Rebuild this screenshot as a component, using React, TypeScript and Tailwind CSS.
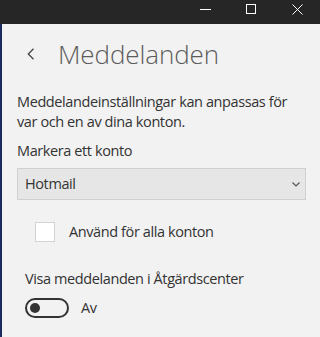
import React from "react";

export default function App() {
  const font = { fontFamily: '"Open Sans", "Noto Sans", sans-serif' };
  return (
    <div className="w-[320px] h-[337px] bg-[#f2f2f2] flex flex-col overflow-hidden" style={font}>
      <div className="h-[24px] bg-[#262626] flex justify-end shrink-0">
        <div className="w-[46px] flex justify-center pt-[9px]">
          <div className="w-[11px] h-[1px] bg-white" />
        </div>
        <div className="w-[46px] flex justify-center pt-[4px]">
          <div className="w-[10px] h-[10px] border border-white" />
        </div>
        <div className="w-[46px] flex justify-center pt-[4px]">
          <svg width="11" height="11" viewBox="0 0 11 11">
            <path d="M0.5 0.5 L10.5 10.5 M10.5 0.5 L0.5 10.5" stroke="white" strokeWidth="1" fill="none" />
          </svg>
        </div>
      </div>
      <div className="flex flex-1">
        <div className="w-[2px] bg-[#1b2b5c] shrink-0" />
        <div className="flex-1 pl-[15px] pr-[14px] text-[#333333] text-[14.5px] leading-[20px] tracking-[-0.4px]">
          <div className="flex items-center h-[36px] mt-[12px]">
            <svg width="8" height="12" viewBox="0 0 8 12" className="ml-[10px]">
              <path d="M6.5 0.8 L1.3 6 L6.5 11.2" stroke="#444" strokeWidth="1.3" fill="none" />
            </svg>
            <span className="ml-[23px] text-[26px] leading-[36px] font-light tracking-[-0.1px] text-[#5c5c5c]">Meddelanden</span>
          </div>
          <p className="mt-[20px]">
            Meddelandeinställningar kan anpassas för var och en av dina konton.
          </p>
          <div className="mt-[9px]">Markera ett konto</div>
          <div className="mt-[7px] h-[32px] border border-[#d0d0d0] bg-[#e6e6e6] flex items-center justify-between pl-[7px] pr-[5px]">
            <span className="text-[#333]">Hotmail</span>
            <svg width="8" height="5" viewBox="0 0 8 5">
              <path d="M0.5 0.5 L4 4 L7.5 0.5" stroke="#555" strokeWidth="1.2" fill="none" />
            </svg>
          </div>
          <div className="mt-[22px] flex items-center ml-[18px]">
            <div className="w-[20px] h-[20px] bg-white border border-[#d4d4d4]" />
            <span className="ml-[14px]">Använd för alla konton</span>
          </div>
          <div className="mt-[27px] ml-[8px]">Visa meddelanden i Åtgärdscenter</div>
          <div className="mt-[9px] ml-[8px] flex items-center">
            <div className="w-[44px] h-[20px] rounded-full border-2 border-[#333] flex items-center pl-[3px]">
              <div className="w-[10px] h-[10px] rounded-full bg-[#333]" />
            </div>
            <span className="ml-[12px]">Av</span>
          </div>
        </div>
      </div>
    </div>
  );
}
